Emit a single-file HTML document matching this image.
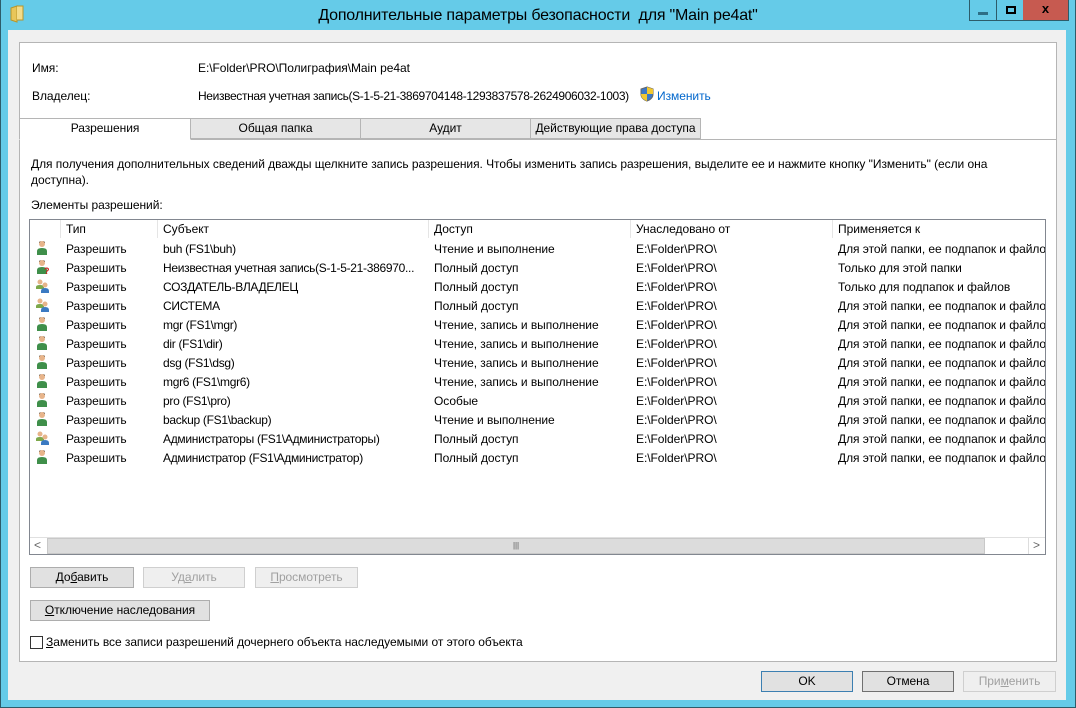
<!DOCTYPE html>
<html><head><meta charset="utf-8">
<style>
*{box-sizing:border-box;margin:0;padding:0}
body{width:1076px;height:708px;overflow:hidden;background:#65cbe8;font-family:"Segoe UI","Liberation Sans",sans-serif;font-size:12px;color:#000;position:relative;letter-spacing:-0.05px}
.abs{position:absolute}
.t{position:absolute;white-space:nowrap;line-height:15px}
.btn{position:absolute;height:21px;border:1px solid #adadad;background:#e1e1e1;text-align:center;line-height:19px}
.dis{color:#a0a0a0;border-color:#cfcfcf;background:#efefef}
.tab{position:absolute;top:118px;height:21px;border:1px solid #b5b5b5;background:#e6e6e6;text-align:center;line-height:19px}
.row{position:absolute;left:0;width:1015px;height:19px}
.row span{position:absolute;top:3px;white-space:nowrap;line-height:15px}
.hd{position:absolute;top:220px;height:18px;border-right:1px solid #e5e5e5;line-height:19px;padding-left:5px}
</style></head><body>
<svg class="abs" style="left:10px;top:5px" width="14" height="18"><path d="M1 3 L7 1 L7 17 L1 15Z" fill="#e8c65a" stroke="#b8962a"/><path d="M7 1 H13 V15 H7" fill="#f3dc8a" stroke="#b8962a"/></svg>
<div class="t" style="left:0;width:1076px;text-align:center;top:6px;font-size:16px;line-height:20px;letter-spacing:-0.2px">Дополнительные параметры безопасности&nbsp; для "Main pe4at"</div>
<div class="abs" style="left:969px;top:0;width:28px;height:21px;border:1px solid #2d5c6a;border-top:0"></div>
<div class="abs" style="left:978px;top:12px;width:10px;height:3px;background:#2d6f86"></div>
<div class="abs" style="left:996px;top:0;width:28px;height:21px;border:1px solid #2d5c6a;border-top:0;border-left:0"></div>
<div class="abs" style="left:1006px;top:6px;width:10px;height:8px;border:2px solid #000"></div>
<div class="abs" style="left:1023px;top:0;width:46px;height:21px;background:#c75a50;border:1px solid #2d5c6a;border-top:0;border-left:0;color:#000;text-align:center;font-weight:bold;font-size:13px;line-height:18px">x</div>
<div class="abs" style="left:8px;top:30px;width:1058px;height:670px;background:#f0f0f0"></div>
<div class="abs" style="left:19px;top:42px;width:1038px;height:620px;background:#fff;border:1px solid #b5b5b5"></div>
<div class="t" style="left:32px;top:61px">Имя:</div>
<div class="t" style="left:198px;top:61px">E:\Folder\PRO\Полиграфия\Main pe4at</div>
<div class="t" style="left:32px;top:89px">Владелец:</div>
<div class="t" style="left:198px;top:89px;letter-spacing:-0.36px">Неизвестная учетная запись(S-1-5-21-3869704148-1293837578-2624906032-1003)</div>
<svg class="abs" style="left:640px;top:86px" width="14" height="16"><path d="M7 1 L13 3 V8 C13 12 10 14 7 15 C4 14 1 12 1 8 V3Z" fill="#3b78c8" stroke="#666"/><path d="M7 1 V8 H13 V3Z M7 8 H1 C1 12 4 14 7 15Z" fill="#f2c830"/></svg>
<div class="t" style="left:657px;top:89px;color:#0066cc">Изменить</div>
<div class="abs" style="left:19px;top:139px;width:1038px;height:1px;background:#b5b5b5"></div>
<div class="tab" style="left:190px;width:171px">Общая папка</div>
<div class="tab" style="left:360px;width:171px">Аудит</div>
<div class="tab" style="left:530px;width:171px">Действующие права доступа</div>
<div class="tab" style="left:19px;width:172px;background:#fff;border-bottom:1px solid #fff;height:22px">Разрешения</div>
<div class="t" style="left:31px;top:157px">Для получения дополнительных сведений дважды щелкните запись разрешения. Чтобы изменить запись разрешения, выделите ее и нажмите кнопку "Изменить" (если она</div>
<div class="t" style="left:31px;top:173px">доступна).</div>
<div class="t" style="left:31px;top:198px">Элементы разрешений:</div>
<div class="abs" style="left:29px;top:219px;width:1017px;height:336px;border:1px solid #828790;background:#fff"></div>
<div class="hd" style="left:30px;width:31px"></div>
<div class="hd" style="left:61px;width:97px">Тип</div>
<div class="hd" style="left:158px;width:271px">Субъект</div>
<div class="hd" style="left:429px;width:202px">Доступ</div>
<div class="hd" style="left:631px;width:202px">Унаследовано от</div>
<div class="hd" style="left:833px;width:212px;border-right:0">Применяется к</div>
<div id="rows" class="abs" style="left:30px;top:239px;width:1015px;height:298px;overflow:hidden"></div>
<script>
var R=[["u","buh (FS1\\buh)","Чтение и выполнение","Для этой папки, ее подпапок и файлов"],
["q","Неизвестная учетная запись(S-1-5-21-386970...","Полный доступ","Только для этой папки"],
["g","СОЗДАТЕЛЬ-ВЛАДЕЛЕЦ","Полный доступ","Только для подпапок и файлов"],
["g","СИСТЕМА","Полный доступ","Для этой папки, ее подпапок и файлов"],
["u","mgr (FS1\\mgr)","Чтение, запись и выполнение","Для этой папки, ее подпапок и файлов"],
["u","dir (FS1\\dir)","Чтение, запись и выполнение","Для этой папки, ее подпапок и файлов"],
["u","dsg (FS1\\dsg)","Чтение, запись и выполнение","Для этой папки, ее подпапок и файлов"],
["u","mgr6 (FS1\\mgr6)","Чтение, запись и выполнение","Для этой папки, ее подпапок и файлов"],
["u","pro (FS1\\pro)","Особые","Для этой папки, ее подпапок и файлов"],
["u","backup (FS1\\backup)","Чтение и выполнение","Для этой папки, ее подпапок и файлов"],
["g","Администраторы (FS1\\Администраторы)","Полный доступ","Для этой папки, ее подпапок и файлов"],
["u","Администратор (FS1\\Администратор)","Полный доступ","Для этой папки, ее подпапок и файлов"]];
var P='<circle cx="7" cy="4" r="3" fill="#e7b48a"/><path d="M4 3 Q7 -1 10 3 L10 2 Q7 0 4 2Z" fill="#3a2a1a"/><path d="M2 15 V11 Q2 8 7 8 Q12 8 12 11 V15Z" fill="#3f8f4a"/>';
var G='<circle cx="5" cy="4" r="2.5" fill="#e7b48a"/><path d="M1 11 V9 Q1 7 5 7 Q9 7 9 9 V11Z" fill="#7da84a"/><circle cx="10" cy="7" r="2.5" fill="#e7b48a"/><path d="M6 15 V13 Q6 10 10 10 Q14 10 14 13 V15Z" fill="#3b7ac2"/>';
var Q='<text x="9" y="15" font-size="9" font-weight="bold" fill="#d02020" font-family="Liberation Sans">?</text>';
var h='';
R.forEach(function(r,i){var y=i*19;var ic=r[0]=='g'?G:P+(r[0]=='q'?Q:'');
h+='<div class="row" style="top:'+y+'px"><svg style="position:absolute;left:5px;top:1px" width="15" height="16">'+ic+'</svg><span style="left:36px">Разрешить</span><span style="left:133px;letter-spacing:-0.3px">'+r[1]+'</span><span style="left:404px">'+r[2]+'</span><span style="left:606px">E:\\Folder\\PRO\\</span><span style="left:808px">'+r[3]+'</span></div>';});
document.getElementById('rows').innerHTML=h;
</script>
<div class="abs" style="left:30px;top:537px;width:1015px;height:17px;background:#fff;border-top:1px solid #e0e0e0"></div>
<div class="abs" style="left:47px;top:538px;width:938px;height:16px;background:#dcdcdc;border:1px solid #c8c8c8;text-align:center;font-size:8px;line-height:14px;color:#555">|||</div>
<div class="t" style="left:34px;top:538px;color:#666">&lt;</div>
<div class="abs" style="left:1028px;top:538px;width:1px;height:16px;background:#ddd"></div>
<div class="t" style="left:1033px;top:538px;color:#666">&gt;</div>
<div class="btn" style="left:30px;top:567px;width:104px">До<u>б</u>авить</div>
<div class="btn dis" style="left:143px;top:567px;width:102px">Уд<u>а</u>лить</div>
<div class="btn dis" style="left:255px;top:567px;width:103px"><u>П</u>росмотреть</div>
<div class="btn" style="left:30px;top:600px;width:180px"><u>О</u>тключение наследования</div>
<div class="abs" style="left:30px;top:636px;width:13px;height:13px;border:1px solid #333;background:#fff"></div>
<div class="t" style="left:46px;top:635px"><u>З</u>аменить все записи разрешений дочернего объекта наследуемыми от этого объекта</div>
<div class="btn" style="left:761px;top:671px;width:92px;border-color:#3c7fb1">OK</div>
<div class="btn" style="left:862px;top:671px;width:92px;border-color:#707070">Отмена</div>
<div class="btn dis" style="left:963px;top:671px;width:93px">При<u>м</u>енить</div>
<div class="abs" style="left:1075px;top:0;width:1px;height:708px;background:#2d5c6a"></div>
<div class="abs" style="left:0;top:0;width:1px;height:708px;background:#2d5c6a"></div>
<div class="abs" style="left:0;top:707px;width:1076px;height:1px;background:#2d5c6a"></div>
</body></html>
